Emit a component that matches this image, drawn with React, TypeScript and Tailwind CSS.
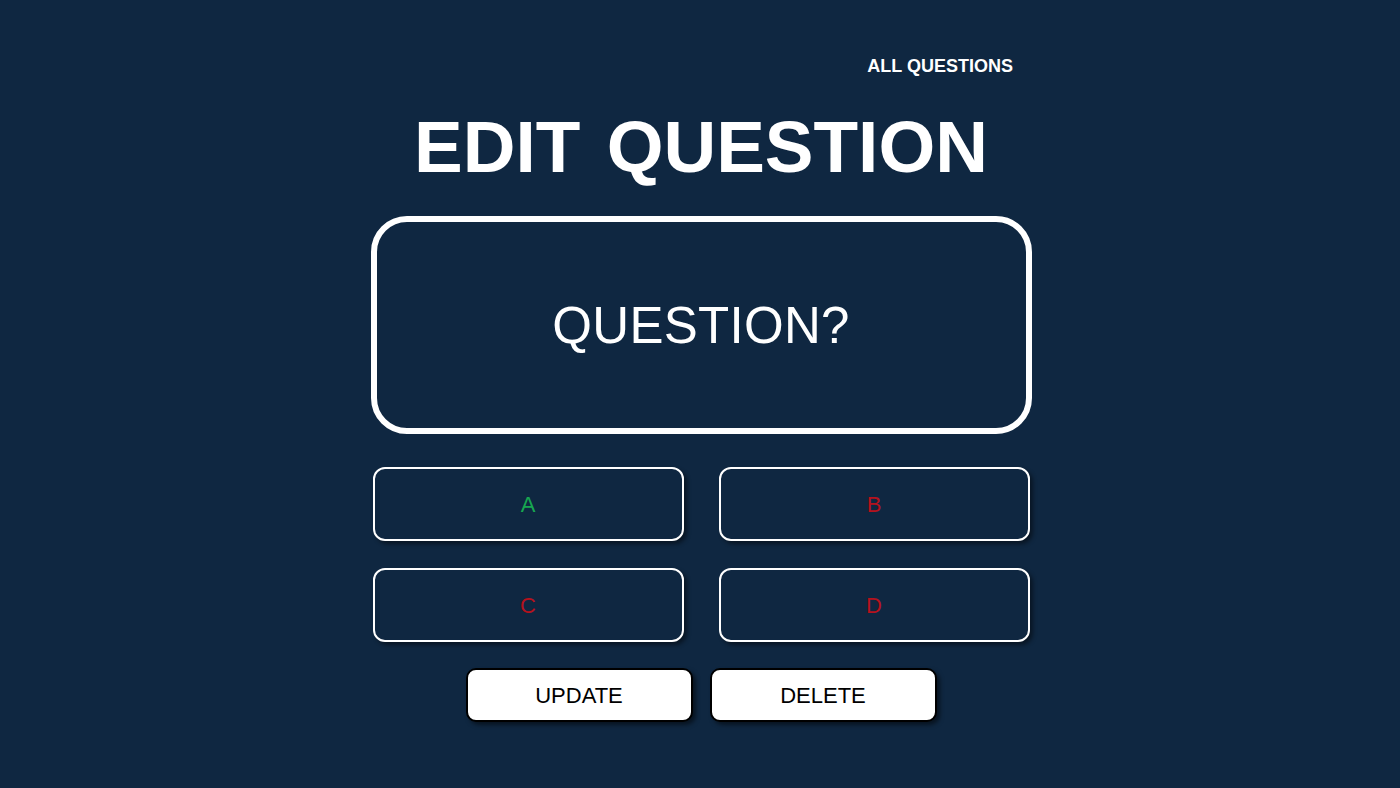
import React from 'react';

const answers = [
  { label: 'A', correct: true },
  { label: 'B', correct: false },
  { label: 'C', correct: false },
  { label: 'D', correct: false },
];

export default function App() {
  return (
    <div className="min-h-screen w-full bg-[#0f2741] font-['Liberation_Sans',Arial,sans-serif] text-white">
      <div className="mx-auto flex w-[662px] translate-x-[1px] flex-col items-center pt-[55px]">
        {/* Top nav */}
        <div className="flex w-full justify-end pr-[19px]">
          <a className="text-[18px] font-bold leading-[22px] text-white">ALL QUESTIONS</a>
        </div>

        {/* Title */}
        <h1 className="mt-[28px] text-[73px] font-bold leading-[84px] [word-spacing:6px]">EDIT QUESTION</h1>

        {/* Question card */}
        <div className="mt-[27px] flex h-[218px] w-[661px] items-center justify-center rounded-[36px] border-[6px] border-white">
          <span className="text-[51px] leading-none tracking-[0.3px]">QUESTION?</span>
        </div>

        {/* Answers */}
        <div className="mt-[33px] grid w-[657px] grid-cols-2 gap-x-[35px] gap-y-[27px]">
          {answers.map((a) => (
            <button
              key={a.label}
              className={`flex h-[74px] items-center justify-center rounded-[12px] border-2 border-white bg-[#0f2741] text-[22px] shadow-[3px_3px_4px_rgba(0,0,0,0.45)] ${
                a.correct ? 'text-[#17a650]' : 'text-[#b5121d]'
              }`}
            >
              {a.label}
            </button>
          ))}
        </div>

        {/* Actions */}
        <div className="mt-[26px] flex gap-[17px]">
          <button className="h-[54px] w-[227px] rounded-[10px] border-2 border-black bg-white text-[22px] text-black shadow-[3px_3px_4px_rgba(0,0,0,0.5)]">
            UPDATE
          </button>
          <button className="h-[54px] w-[227px] rounded-[10px] border-2 border-black bg-white text-[22px] text-black shadow-[3px_3px_4px_rgba(0,0,0,0.5)]">
            DELETE
          </button>
        </div>
      </div>
    </div>
  );
}
